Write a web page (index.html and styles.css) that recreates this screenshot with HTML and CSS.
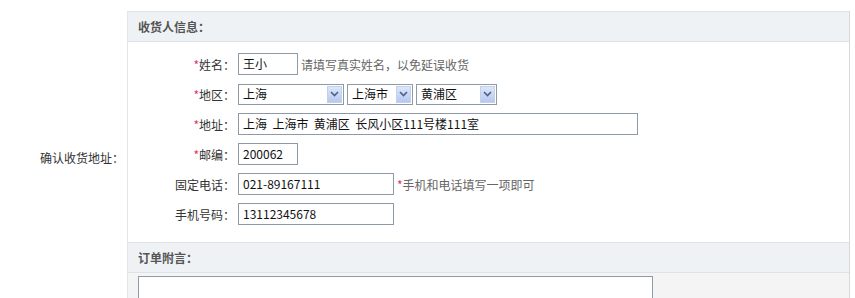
FILE: index.html
```html
<!DOCTYPE html>
<html lang="zh-CN">
<head>
  <meta charset="UTF-8">
  <title>确认收货地址</title>
  <link rel="stylesheet" href="styles.css">
</head>
<body>
  <div class="order">
    <div class="side-label">确认收货地址：</div>
    <div class="panel">
      <div class="panel-head">收货人信息：</div>
      <div class="panel-body">
        <div class="row">
          <label class="lbl"><i>*</i>姓名：</label>
          <span class="ipt ipt-short">王小</span>
          <span class="tip">请填写真实姓名，以免延误收货</span>
        </div>
        <div class="row">
          <label class="lbl"><i>*</i>地区：</label>
          <span class="sel sel-prov">上海<b class="arrow"><svg width="9" height="6" viewBox="0 0 9 6"><path d="M1 1l3.5 3.5L8 1" fill="none" stroke="#4d6185" stroke-width="1.6"/></svg></b></span>
          <span class="sel sel-city">上海市<b class="arrow"><svg width="9" height="6" viewBox="0 0 9 6"><path d="M1 1l3.5 3.5L8 1" fill="none" stroke="#4d6185" stroke-width="1.6"/></svg></b></span>
          <span class="sel sel-dist">黄浦区<b class="arrow"><svg width="9" height="6" viewBox="0 0 9 6"><path d="M1 1l3.5 3.5L8 1" fill="none" stroke="#4d6185" stroke-width="1.6"/></svg></b></span>
        </div>
        <div class="row">
          <label class="lbl"><i>*</i>地址：</label>
          <span class="ipt ipt-long">上海&nbsp; 上海市&nbsp; 黄浦区&nbsp; 长风小区111号楼111室</span>
        </div>
        <div class="row">
          <label class="lbl"><i>*</i>邮编：</label>
          <span class="ipt ipt-short">200062</span>
        </div>
        <div class="row">
          <label class="lbl">固定电话：</label>
          <span class="ipt ipt-mid">021-89167111</span>
          <span class="tip"><i>*</i>手机和电话填写一项即可</span>
        </div>
        <div class="row">
          <label class="lbl">手机号码：</label>
          <span class="ipt ipt-mid">13112345678</span>
        </div>
      </div>
      <div class="panel-head">订单附言：</div>
      <div class="panel-note">
        <div class="note-box"></div>
      </div>
    </div>
  </div>
</body>
</html>
```

FILE: styles.css
```css
body {
  margin: 0;
  font-family: "Noto Sans CJK SC", "Liberation Sans", sans-serif;
  font-size: 12px;
  color: #333;
  background: #fff;
  overflow: hidden;
}
.order {
  display: flex;
  padding-top: 11px;
}
.side-label {
  width: 124px;
  flex: none;
  text-align: right;
  padding-top: 138px;
  padding-right: 3px;
}
.panel {
  width: 721px;
  border-left: 1px solid #e3e6e9;
  border-right: 1px solid #d6d9dc;
}
.panel-head {
  height: 29px;
  line-height: 29px;
  padding-left: 10px;
  background: #eef2f5;
  border-top: 1px solid #dde3e8;
  border-bottom: 1px solid #dde3e8;
  font-weight: bold;
  color: #555;
}
.panel-body {
  padding: 7px 0 13px;
}
.row {
  height: 30px;
  display: flex;
  align-items: center;
}
.lbl {
  width: 107px;
  flex: none;
  text-align: right;
  margin-right: 3px;
  color: #333;
}
i {
  font-style: normal;
  color: #e0306a;
}
.ipt, .sel {
  box-sizing: border-box;
  height: 22px;
  line-height: 20px;
  border: 1px solid #8e9aa6;
  padding: 0 4px;
  background: #fff;
  color: #111;
  white-space: nowrap;
}
.ipt-short { width: 60px; }
.ipt-mid { width: 156px; }
.ipt-long { width: 400px; }
.tip {
  margin-left: 3px;
  color: #666;
}
.sel {
  height: 21px;
  display: flex;
  align-items: center;
  justify-content: space-between;
  padding: 0 1px 0 4px;
  margin-right: 3px;
}
.sel-prov { width: 106px; }
.sel-city { width: 66px; }
.sel-dist { width: 81px; }
.arrow {
  width: 15px;
  height: 17px;
  display: flex;
  align-items: center;
  justify-content: center;
  background: linear-gradient(#dce6fb, #b7c8ef);
  border: 1px solid #c3d0ea;
  box-sizing: border-box;
}
.panel-note {
  background: #f4f4f4;
  padding: 3px 10px 0;
  height: 40px;
}
.note-box {
  width: 515px;
  height: 30px;
  box-sizing: border-box;
  border: 1px solid #8e9aa6;
  background: #fff;
}
```
